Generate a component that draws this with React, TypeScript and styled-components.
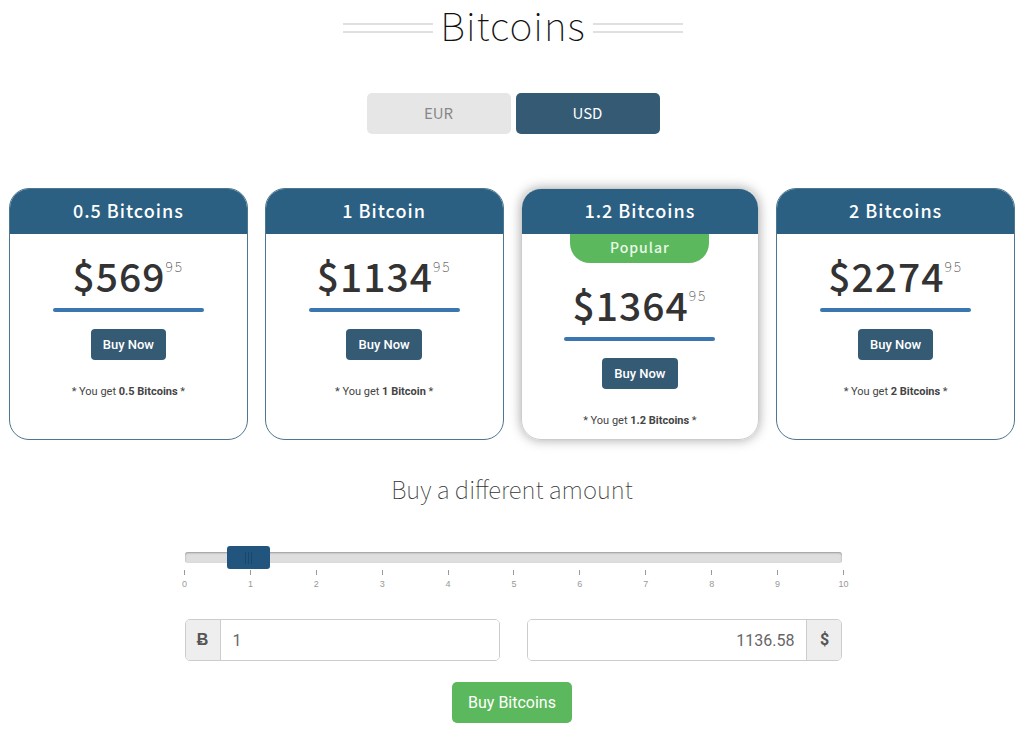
import React, { useState } from "react";
import styled, { createGlobalStyle } from "styled-components";

const heading = `"Noto Sans CJK JP", "Open Sans", sans-serif`;
const text = `Roboto, "Liberation Sans", sans-serif`;

const GlobalStyle = createGlobalStyle`
  *, *::before, *::after { box-sizing: border-box; }
  body { margin: 0; background: #fff; color: #444; font-family: ${text}; }
  h1, h2, h3, p, ul { margin: 0; padding: 0; }
  button, input { font: inherit; }
`;

const Page = styled.main`
  padding: 0 9px 12px;
`;

const Top = styled.header`
  display: flex;
  flex-direction: column;
  align-items: center;
  gap: 40px;
  padding-left: 2px;
`;

const Title = styled.h1`
  display: flex;
  align-items: center;
  gap: 7px;
  font: 100 39px/48px ${heading};
  letter-spacing: 1px;
  color: #111;

  &::before, &::after {
    content: "";
    width: 90px;
    height: 10px;
    margin-top: 7px;
    border: solid #e0e0e0;
    border-width: 2px 0;
  }
`;

const Currencies = styled.div`
  display: flex;
  gap: 5px;
  margin-top: 5px;
`;

const CurrencyButton = styled.button<{ $active: boolean }>`
  width: 144px;
  height: 41px;
  padding: 0 0 2px;
  border: 0;
  border-radius: 5px;
  font: 400 15px/20px ${heading};
  color: ${p => (p.$active ? "#fff" : "#888")};
  background: ${p => (p.$active ? "#355a74" : "#e6e6e6")};
  cursor: pointer;
`;

const Cards = styled.section`
  display: grid;
  grid-template-columns: repeat(4, 1fr);
  gap: 17px;
  margin-top: 54px;
`;

const Card = styled.article<{ $popular?: boolean }>`
  display: flex;
  flex-direction: column;
  align-items: center;
  min-height: 252px;
  border: 1px solid ${p => (p.$popular ? "#ccc" : "#4d7690")};
  border-radius: 20px;
  overflow: hidden;
  box-shadow: ${p => (p.$popular ? "0 0 12px rgba(0, 0, 0, 0.35)" : "none")};
`;

const CardTitle = styled.h2`
  align-self: stretch;
  padding-bottom: 2px;
  text-align: center;
  font: 500 18px/43px ${heading};
  letter-spacing: 1px;
  color: #fff;
  background: #2c6083;
`;

const Ribbon = styled.span`
  width: 139px;
  padding-bottom: 2px;
  border-radius: 0 0 20px 20px;
  text-align: center;
  font: 500 14px/27px ${heading};
  letter-spacing: 1px;
  color: #eaf8ea;
  background: #5cb85c;
`;

const Price = styled.p`
  display: flex;
  justify-content: center;
  padding: 11px 0 3px;
  font: 500 39px/60px ${heading};
  letter-spacing: 1px;
  color: #333;
`;

const Cents = styled.sup`
  font-size: 14px;
  font-weight: 100;
  line-height: 42px;
  letter-spacing: 2px;
`;

const Rule = styled.hr`
  width: 151px;
  height: 4px;
  margin: 0;
  border: 0;
  border-radius: 2px;
  background: #3a76b0;
`;

const BuyNow = styled.button`
  height: 31px;
  margin-top: 17px;
  padding: 0 12px;
  border: 0;
  border-radius: 4px;
  font: 500 13px/18px ${text};
  color: #fff;
  background: #355a74;
  cursor: pointer;
`;

const Note = styled.p`
  margin-top: 24px;
  font-size: 11px;
  line-height: 16px;
`;

const Calculator = styled.form`
  display: flex;
  flex-direction: column;
  align-items: center;
  padding-top: 29px;
`;

const Subtitle = styled.h2`
  padding-bottom: 1px;
  font: 100 24px/40px ${heading};
  color: #333;
`;

const Fields = styled.div`
  width: calc(66% - 6px);
  margin-left: 3px;
`;

const Track = styled.div`
  display: flex;
  align-items: center;
  height: 11px;
  margin-top: 42px;
  border-radius: 3px;
  background: #dedede;
  box-shadow: inset 0 1px 2px #999;
`;

const Range = styled.input`
  flex: 1;
  min-width: 0;
  height: 23px;
  margin: 0 -20px 0 -23px;
  appearance: none;
  background: transparent;
  cursor: pointer;

  &::-webkit-slider-thumb {
    appearance: none;
    width: 43px;
    height: 23px;
    border-radius: 3px;
    background:
      linear-gradient(90deg, #1b466b 1px, transparent 1px 3px, #1b466b 3px 4px, transparent 4px 6px, #1b466b 6px)
      center / 7px 12px no-repeat,
      #22557d;
  }
`;

const Scale = styled.ul`
  display: flex;
  justify-content: space-between;
  margin: 7px -1px 0 0;
  list-style: none;
`;

const Tick = styled.li`
  display: flex;
  flex-direction: column;
  align-items: center;
  width: 0;
  font: 9px/10px "Liberation Sans", sans-serif;
  color: #999;

  &::before {
    content: "";
    width: 1px;
    height: 5px;
    margin-bottom: 4px;
    background: #999;
  }
`;

const Inputs = styled.div`
  display: grid;
  grid-template-columns: 1fr 1fr;
  gap: 27px;
  margin-top: 30px;
`;

const Group = styled.label<{ $end?: boolean }>`
  display: flex;
  flex-direction: ${p => (p.$end ? "row-reverse" : "row")};
  height: 42px;
  border: 1px solid #ccc;
  border-radius: 5px;
  overflow: hidden;

  input { text-align: ${p => (p.$end ? "right" : "left")}; }
  span { border: solid #ccc; border-width: ${p => (p.$end ? "0 0 0 1px" : "0 1px 0 0")}; }
`;

const Addon = styled.span`
  flex: none;
  width: 35px;
  text-align: center;
  font-size: 16px;
  font-weight: 700;
  line-height: 40px;
  color: #555;
  background: #eee;
`;

const Amount = styled.input`
  flex: 1;
  min-width: 0;
  padding: 0 12px;
  border: 0;
  font-size: 16px;
  color: #666;
  background: #fff;
`;

const Submit = styled.button`
  height: 41px;
  margin-top: 21px;
  padding: 0 16px;
  border: 0;
  border-radius: 5px;
  font: 400 16px/22px ${text};
  color: #fff;
  background: #5cb85c;
  cursor: pointer;
`;

const packages = [
  { amount: "0.5 Bitcoins", price: "569" },
  { amount: "1 Bitcoin", price: "1134" },
  { amount: "1.2 Bitcoins", price: "1364", popular: true },
  { amount: "2 Bitcoins", price: "2274" },
];

const RATE = 1136.58;

export default function App() {
  const [currency, setCurrency] = useState("USD");
  const [amount, setAmount] = useState("1");
  const symbol = currency === "USD" ? "$" : "€";

  return (
    <Page>
      <GlobalStyle />
      <Top>
        <Title>Bitcoins</Title>
        <Currencies>
          {["EUR", "USD"].map(c => (
            <CurrencyButton key={c} type="button" $active={c === currency} onClick={() => setCurrency(c)}>
              {c}
            </CurrencyButton>
          ))}
        </Currencies>
      </Top>

      <Cards>
        {packages.map(p => (
          <Card key={p.amount} $popular={p.popular}>
            <CardTitle>{p.amount}</CardTitle>
            {p.popular && <Ribbon>Popular</Ribbon>}
            <Price>
              {symbol}{p.price}
              <Cents>95</Cents>
            </Price>
            <Rule />
            <BuyNow type="button">Buy Now</BuyNow>
            <Note>* You get <b>{p.amount}</b> *</Note>
          </Card>
        ))}
      </Cards>

      <Calculator onSubmit={e => e.preventDefault()}>
        <Subtitle>Buy a different amount</Subtitle>
        <Fields>
          <Track>
            <Range
              type="range"
              aria-label="Bitcoin amount"
              min="0"
              max="10"
              step="0.1"
              value={Number(amount) || 0}
              onChange={e => setAmount(e.target.value)}
            />
          </Track>
          <Scale>
            {Array.from({ length: 11 }, (_, i) => <Tick key={i}>{i}</Tick>)}
          </Scale>
          <Inputs>
            <Group>
              <Addon>Ƀ</Addon>
              <Amount value={amount} onChange={e => setAmount(e.target.value)} />
            </Group>
            <Group $end>
              <Addon>{symbol}</Addon>
              <Amount
                value={((Number(amount) || 0) * RATE).toFixed(2)}
                onChange={e => setAmount(String((Number(e.target.value) || 0) / RATE))}
              />
            </Group>
          </Inputs>
        </Fields>
        <Submit type="submit">Buy Bitcoins</Submit>
      </Calculator>
    </Page>
  );
}
